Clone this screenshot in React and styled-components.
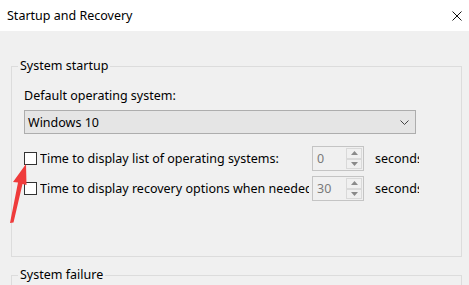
import React from "react";
import styled, { createGlobalStyle } from "styled-components";

const Global = createGlobalStyle`
  html, body { margin: 0; padding: 0; background: #f0f0f0; }
  body { font-family: "Noto Sans", "Open Sans", sans-serif; font-size: 12.5px; color: #000; }
  * { box-sizing: border-box; }
`;

const Window = styled.div`
  position: relative;
  width: 469px;
  height: 285px;
  overflow: hidden;
  background: #f0f0f0;
`;

const TitleBar = styled.div`
  height: 31px;
  background: #fff;
  display: flex;
  align-items: center;
  justify-content: space-between;
  padding: 0 7px 0 7px;
`;

const Title = styled.span`
  line-height: 16px;
`;

const CloseButton = styled.button`
  border: 0;
  background: transparent;
  padding: 0;
  width: 10px;
  height: 10px;
  display: flex;
`;

const Body = styled.div`
  padding: 27px 7px 0 11px;
  display: flex;
  flex-direction: column;
  gap: 10px;
`;

const Group = styled.fieldset`
  margin: 0;
  border: 1px solid #dcdcdc;
  padding: ${(p) => p.$pad || "14px 0 55px 12px"};
  min-width: 0;
`;

const Legend = styled.legend`
  padding: 0 2px;
  margin-left: -6px;
  line-height: 16px;
`;

const FieldLabel = styled.div`
  line-height: 16px;
  margin-bottom: 6px;
`;

const Select = styled.div`
  width: 392px;
  height: 24px;
  background: #e5e5e5;
  border: 1px solid #adadad;
  display: flex;
  align-items: center;
  justify-content: space-between;
  padding: 0 6px 0 3px;
  margin-bottom: 12px;
`;

const Rows = styled.div`
  display: flex;
  flex-direction: column;
  gap: 5px;
`;

const Row = styled.div`
  display: flex;
  align-items: center;
  height: 25px;
`;

const Check = styled.span`
  width: 13px;
  height: 13px;
  border: 1px solid #333;
  background: #fff;
  flex: none;
  margin-right: 3px;
`;

const RowLabel = styled.span`
  width: 269px;
  white-space: nowrap;
  overflow: hidden;
  flex: none;
  margin-right: 3px;
`;

const Spin = styled.div`
  width: 52px;
  height: 25px;
  border: 1px solid #c4c4c4;
  background: #f0f0f0;
  display: flex;
  flex: none;
`;

const SpinValue = styled.span`
  flex: 1;
  color: #7a7a7a;
  padding-left: 4px;
  line-height: 23px;
`;

const SpinButtons = styled.div`
  width: 17px;
  display: flex;
  flex-direction: column;
  padding: 1px 1px 1px 0;
`;

const SpinButton = styled.div`
  flex: 1;
  border: 1px solid #d9d9d9;
  background: #f0f0f0;
  display: flex;
  align-items: center;
  justify-content: center;
`;

const Unit = styled.span`
  width: 44px;
  margin-left: 11px;
  white-space: nowrap;
  overflow: hidden;
  flex: none;
`;

const Arrow = styled.svg`
  position: absolute;
  left: 0;
  top: 0;
  pointer-events: none;
`;

const Tri = ({ up }) => (
  <svg width="7" height="4" viewBox="0 0 7 4">
    <polygon points={up ? "3.5,0 7,4 0,4" : "0,0 7,0 3.5,4"} fill="#8a8a8a" />
  </svg>
);

const SpinBox = ({ value }) => (
  <Spin>
    <SpinValue>{value}</SpinValue>
    <SpinButtons>
      <SpinButton><Tri up /></SpinButton>
      <SpinButton><Tri /></SpinButton>
    </SpinButtons>
  </Spin>
);

export default function App() {
  return (
    <Window>
      <Global />
      <TitleBar>
        <Title>Startup and Recovery</Title>
        <CloseButton aria-label="Close">
          <svg width="10" height="10" viewBox="0 0 10 10">
            <path d="M0.5 0.5 L9.5 9.5 M9.5 0.5 L0.5 9.5" stroke="#111" strokeWidth="1" />
          </svg>
        </CloseButton>
      </TitleBar>
      <Body>
        <Group>
          <Legend>System startup</Legend>
          <FieldLabel>Default operating system:</FieldLabel>
          <Select>
            <span>Windows 10</span>
            <svg width="9" height="5" viewBox="0 0 9 5">
              <path d="M0.5 0.5 L4.5 4.5 L8.5 0.5" stroke="#444" strokeWidth="1" fill="none" />
            </svg>
          </Select>
          <Rows>
            <Row>
              <Check />
              <RowLabel>Time to display list of operating systems:</RowLabel>
              <SpinBox value="0" />
              <Unit>seconds</Unit>
            </Row>
            <Row>
              <Check />
              <RowLabel>Time to display recovery options when needed:</RowLabel>
              <SpinBox value="30" />
              <Unit>seconds</Unit>
            </Row>
          </Rows>
        </Group>
        <Group $pad="14px 0 40px 12px">
          <Legend>System failure</Legend>
        </Group>
      </Body>
      <Arrow width="40" height="230" viewBox="0 0 40 230">
        <polygon points="26,164 13,182 18,182.5 10,223 13.5,222.5 22.5,184 26.5,185" fill="#ef3b3b" />
      </Arrow>
    </Window>
  );
}
